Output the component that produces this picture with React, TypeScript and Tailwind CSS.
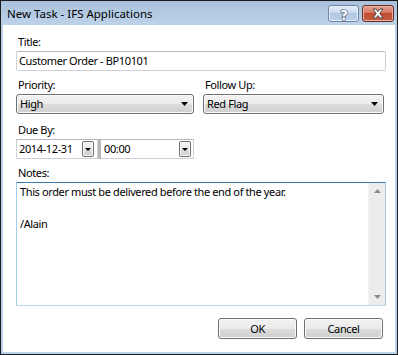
import React from "react";

function Arrow() {
  return (
    <svg width="7" height="4" viewBox="0 0 7 4">
      <path d="M0 0 H7 L3.5 4 Z" fill="#000" />
    </svg>
  );
}

function SelectBox({ value }: { value: string }) {
  return (
    <div className="mt-[1px] h-[20px] border border-[#707070] rounded-[3px] bg-[linear-gradient(to_bottom,#f2f2f2_0%,#ebebeb_50%,#dddddd_50%,#cfcfcf_100%)] shadow-[inset_0_0_0_1px_#fbfbfb] flex items-center pl-[3px] pr-[5px] justify-between">
      <span className="leading-[16px]">{value}</span>
      <Arrow />
    </div>
  );
}

function DropBtn() {
  return (
    <div className="w-[12px] h-[16px] border border-[#707070] rounded-[2px] bg-[linear-gradient(to_bottom,#f2f2f2_0%,#ebebeb_50%,#dddddd_50%,#cfcfcf_100%)] shadow-[inset_0_0_0_1px_#fbfbfb] flex items-center justify-center">
      <svg width="6" height="3" viewBox="0 0 6 3">
        <path d="M0 0 H6 L3 3 Z" fill="#000" />
      </svg>
    </div>
  );
}

function Btn({ label }: { label: string }) {
  return (
    <div className="w-[79px] h-[21px] border border-[#707070] rounded-[3px] bg-[linear-gradient(to_bottom,#f2f2f2_0%,#ebebeb_50%,#dddddd_50%,#cfcfcf_100%)] shadow-[inset_0_0_0_1px_#fbfbfb] flex items-center justify-center leading-[16px]">
      {label}
    </div>
  );
}

export default function App() {
  return (
    <div className="w-[398px] h-[355px] bg-white font-['Noto_Sans',sans-serif] text-[11px] tracking-[-0.38px] text-black">
      <div className="w-[398px] h-[355px] border border-[#1c1c1c] bg-[#bad1ea] flex flex-col">
        {/* Title bar */}
        <div className="h-[24px] shrink-0 bg-[linear-gradient(to_bottom,#a9c1db,#bdd3ea)] flex items-start justify-between pl-[6px] pr-[3px]">
          <div className="leading-[16px] pt-[5px] text-[11.5px] tracking-normal text-[#000]">New Task - IFS Applications</div>
          <div className="flex gap-[3px] pt-[4px]">
            <div className="w-[31px] h-[17px] border border-[#6f84a3] rounded-[3px] bg-[linear-gradient(to_bottom,#e3ecf6_0%,#c7d8ec_50%,#b2c8e2_50%,#b9d0ea_100%)] shadow-[inset_0_0_0_1px_#e8f0fa] flex items-center justify-center">
              <svg width="12" height="14" viewBox="0 0 12 14">
                <text x="6" y="12.5" textAnchor="middle" fontFamily="'DejaVu Sans', sans-serif" fontWeight="bold" fontSize="13.5" fill="#fff" stroke="#3c4a5e" strokeWidth="1.1" paintOrder="stroke">?</text>
              </svg>
            </div>
            <div className="w-[32px] h-[17px] border border-[#6b2a20] rounded-[3px] bg-[linear-gradient(to_bottom,#e5a394_0%,#d3735e_50%,#c04a30_50%,#c55f43_100%)] shadow-[inset_0_0_0_1px_#e9b4a6] flex items-center justify-center">
              <svg width="14" height="11" viewBox="0 0 14 11">
                <path d="M2 1 H5 L7 3.5 L9 1 H12 L8.8 5.5 L12 10 H9 L7 7.5 L5 10 H2 L5.2 5.5 Z" fill="#fff" stroke="#4a4a4a" strokeWidth="1" strokeLinejoin="round" />
              </svg>
            </div>
          </div>
        </div>

        {/* Client */}
        <div className="flex-1 mx-[2px] mb-[2px] bg-white flex flex-col pl-[13px] pr-[9px] pt-[9px]">
          <div className="pl-[2px] leading-[16px]">Title:</div>
          <div className="mt-[1px] h-[20px] border border-[#cdd1d7] border-t-[#b4b7be] rounded-[2px] flex items-center pl-[2px] leading-[16px]">
            Customer Order - BP10101
          </div>

          <div className="mt-[6px] grid grid-cols-[178px_181px] gap-x-[9px]">
            <div className="flex flex-col">
              <div className="pl-[2px] leading-[16px]">Priority:</div>
              <SelectBox value="High" />
            </div>
            <div className="flex flex-col">
              <div className="pl-[2px] leading-[16px]">Follow Up:</div>
              <SelectBox value="Red Flag" />
            </div>
          </div>

          <div className="mt-[8px] pl-[2px] leading-[16px]">Due By:</div>
          <div className="mt-[1px] flex h-[20px] w-[178px]">
            <div className="w-[82px] border border-[#cdd1d7] border-t-[#b4b7be] flex items-center justify-between pl-[2px] pr-[3px]">
              <span className="leading-[16px]">2014-12-31</span>
              <DropBtn />
            </div>
            <div className="w-[3px] bg-[#b8b8b8]" />
            <div className="flex-1 border border-[#cdd1d7] border-t-[#b4b7be] border-l-0 flex items-center justify-between pl-[3px] pr-[2px]">
              <span className="leading-[16px]">00:00</span>
              <DropBtn />
            </div>
          </div>

          <div className="mt-[6px] pl-[2px] leading-[16px]">Notes:</div>
          <div className="mt-[1px] h-[124px] border border-[#a4c9e3] border-t-[#3d7bad] border-b-[#b7d9ed] flex">
            <div className="flex-1 pl-[3px] pt-[1px] leading-[16px]">
              <div>This order must be delivered before the end of the year.</div>
              <div className="h-[16px]" />
              <div>/Alain</div>
            </div>
            <div className="w-[17px] bg-[#ececec] border-l border-[#f2f2f2] flex flex-col items-center justify-between py-[6px]">
              <svg width="7" height="4" viewBox="0 0 7 4">
                <path d="M0 4 H7 L3.5 0 Z" fill="#8c8c8c" />
              </svg>
              <svg width="7" height="4" viewBox="0 0 7 4">
                <path d="M0 0 H7 L3.5 4 Z" fill="#8c8c8c" />
              </svg>
            </div>
          </div>

          <div className="mt-[12px] flex justify-end gap-[7px] pr-[3px]">
            <Btn label="OK" />
            <Btn label="Cancel" />
          </div>
        </div>
      </div>
    </div>
  );
}
